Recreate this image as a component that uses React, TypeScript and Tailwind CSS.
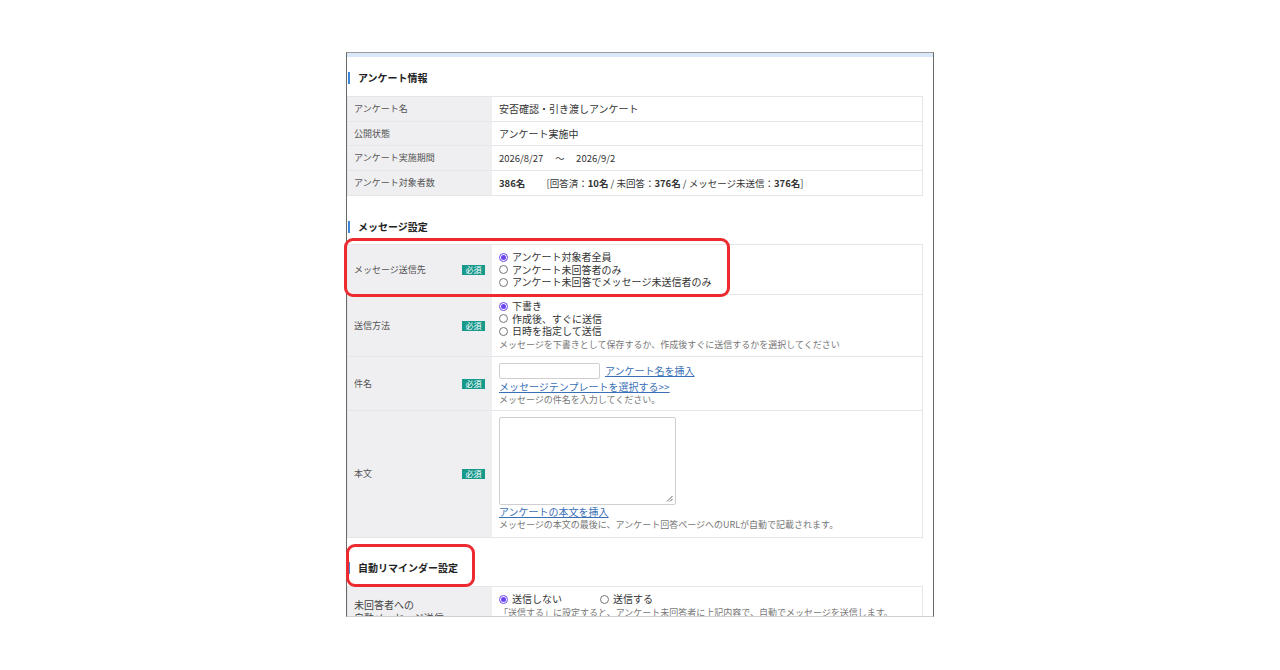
import React from "react";

const FONT = { fontFamily: '"Noto Sans CJK JP", "Noto Sans", sans-serif' };

function Badge() {
  return (
    <span className="inline-flex h-[10px] w-[23px] items-center justify-center bg-[#17998c] text-[8px] leading-none text-white">
      必須
    </span>
  );
}

function Radio({ checked, label }: { checked?: boolean; label: string }) {
  return (
    <div className="flex h-[12.5px] items-center">
      {checked ? (
        <span className="mr-[4px] flex h-[9px] w-[9px] items-center justify-center rounded-full border border-[#6a45f0] bg-white">
          <span className="h-[5px] w-[5px] rounded-full bg-[#6a45f0]" />
        </span>
      ) : (
        <span className="mr-[4px] h-[9px] w-[9px] rounded-full border border-[#777] bg-white" />
      )}
      <span className="text-[10px] leading-none text-[#333]">{label}</span>
    </div>
  );
}

function Heading({ children, h, pt }: { children: React.ReactNode; h: string; pt: string }) {
  return (
    <div className={`flex items-center ${h} ${pt} pl-[1px]`}>
      <span className="h-[12px] w-[2px] bg-[#3d86d8]" />
      <span className="ml-[8px] text-[10px] font-bold leading-none text-[#222]">{children}</span>
    </div>
  );
}

function InfoRow({ label, children, last }: { label: string; children: React.ReactNode; last?: boolean }) {
  return (
    <div className={`flex h-[24.5px] ${last ? "" : "border-b border-[#e6e6e8]"}`}>
      <div className="flex w-[144px] items-center bg-[#efeff1] pl-[6px] text-[9px] text-[#555]">{label}</div>
      <div className="flex flex-1 items-center bg-white pl-[7px] text-[10px] text-[#333]">{children}</div>
    </div>
  );
}

function FormRow({
  label,
  h,
  children,
  last,
  valueClass,
}: {
  label: string;
  h: string;
  children: React.ReactNode;
  last?: boolean;
  valueClass?: string;
}) {
  return (
    <div className={`flex ${h} ${last ? "" : "border-b border-[#e6e6e8]"}`}>
      <div className="flex w-[144px] items-center justify-between bg-[#efeff1] pl-[6px] pr-[7px]">
        <span className="text-[9px] text-[#555]">{label}</span>
        <Badge />
      </div>
      <div className={`flex flex-1 flex-col bg-white pl-[7px] ${valueClass ?? "justify-center"}`}>{children}</div>
    </div>
  );
}

export default function App() {
  return (
    <div className="min-h-[670px] w-full bg-white" style={FONT}>
      <div className="flex justify-center pt-[52px]">
        <div className="h-[565px] w-[588px] overflow-x-visible overflow-y-clip border-x border-t border-b border-x-[#6a6a6a] border-t-[#9a9a9a] border-b-[#cfcfcf]">
          <div className="h-[4px] bg-[#d9e7f8]" />
          <div className="pr-[10px]">
            <Heading h="h-[39px]" pt="pt-[3px]">アンケート情報</Heading>
            <div className="border border-[#e6e6e8]">
              <InfoRow label="アンケート名">安否確認・引き渡しアンケート</InfoRow>
              <InfoRow label="公開状態">アンケート実施中</InfoRow>
              <InfoRow label="アンケート実施期間">
                <span className="text-[9.5px] whitespace-pre">2026/8/27　 ～　 2026/9/2</span>
              </InfoRow>
              <InfoRow label="アンケート対象者数" last>
                <span className="text-[9.5px] whitespace-pre">
                  <b>386名</b>
                  {"　　 "}[回答済：<b>10名</b> / 未回答：<b>376名</b> / メッセージ未送信：<b>376名</b>]
                </span>
              </InfoRow>
            </div>

            <Heading h="h-[48px]" pt="pt-[13px]">メッセージ設定</Heading>
            <div className="border border-[#e6e6e8]">
              <div className="relative">
                <FormRow label="メッセージ送信先" h="h-[50px]">
                  <Radio checked label="アンケート対象者全員" />
                  <Radio label="アンケート未回答者のみ" />
                  <Radio label="アンケート未回答でメッセージ未送信者のみ" />
                </FormRow>
                <div className="pointer-events-none absolute left-[-4px] top-[-7px] h-[59px] w-[386px] rounded-[9px] border-[3px] border-[#ec2a2f]" />
              </div>
              <FormRow label="送信方法" h="h-[62px]">
                <Radio checked label="下書き" />
                <Radio label="作成後、すぐに送信" />
                <Radio label="日時を指定して送信" />
                <div className="mt-[1px] text-[9px] leading-[13px] text-[#777]">
                  メッセージを下書きとして保存するか、作成後すぐに送信するかを選択してください
                </div>
              </FormRow>
              <FormRow label="件名" h="h-[54px]" valueClass="justify-start pt-[6px]">
                <div className="flex items-center">
                  <div className="h-[16px] w-[101px] rounded-[2px] border border-[#cfcfcf] bg-white" />
                  <span className="ml-[5px] text-[10px] leading-none text-[#3a6fb5] underline">アンケート名を挿入</span>
                </div>
                <div className="mt-[1px] text-[10px] leading-[13px] text-[#3a6fb5] underline">
                  メッセージテンプレートを選択する&gt;&gt;
                </div>
                <div className="text-[9px] leading-[14px] text-[#777]">メッセージの件名を入力してください。</div>
              </FormRow>
              <FormRow label="本文" h="h-[126px]" last valueClass="justify-start pt-[6px]">
                <div className="relative h-[88px] w-[177px] rounded-[2px] border border-[#cfcfcf] bg-white">
                  <svg className="absolute bottom-[2px] right-[2px]" width="7" height="7" viewBox="0 0 7 7">
                    <path d="M6.5 1 L1 6.5 M6.5 4 L4 6.5" stroke="#555" strokeWidth="0.9" />
                  </svg>
                </div>
                <div className="mt-[1px] text-[10px] leading-[12px] text-[#3a6fb5] underline">アンケートの本文を挿入</div>
                <div className="text-[9px] leading-[14px] text-[#777]">
                  メッセージの本文の最後に、アンケート回答ページへのURLが自動で記載されます。
                </div>
              </FormRow>
            </div>

            <div className="relative">
              <Heading h="h-[48px]" pt="pt-[11px]">自動リマインダー設定</Heading>
              <div className="pointer-events-none absolute left-[-1px] top-[6px] h-[43px] w-[129px] rounded-[9px] border-[3px] border-[#ec2a2f]" />
            </div>
            <div className="border border-[#e6e6e8]">
              <div className="flex h-[60px]">
                <div className="w-[144px] bg-[#efeff1] pl-[6px] pt-[11px] text-[10px] leading-[13px] text-[#444]">
                  未回答者への
                  <br />
                  自動メッセージ送信
                </div>
                <div className="flex flex-1 flex-col bg-white pl-[7px] pt-[6px]">
                  <div className="flex">
                    <div className="w-[101px]">
                      <Radio checked label="送信しない" />
                    </div>
                    <Radio label="送信する" />
                  </div>
                  <div className="text-[9px] leading-[13px] text-[#777]">
                    「送信する」に設定すると、アンケート未回答者に上記内容で、自動でメッセージを送信します。
                  </div>
                </div>
              </div>
            </div>
          </div>
        </div>
      </div>
    </div>
  );
}
